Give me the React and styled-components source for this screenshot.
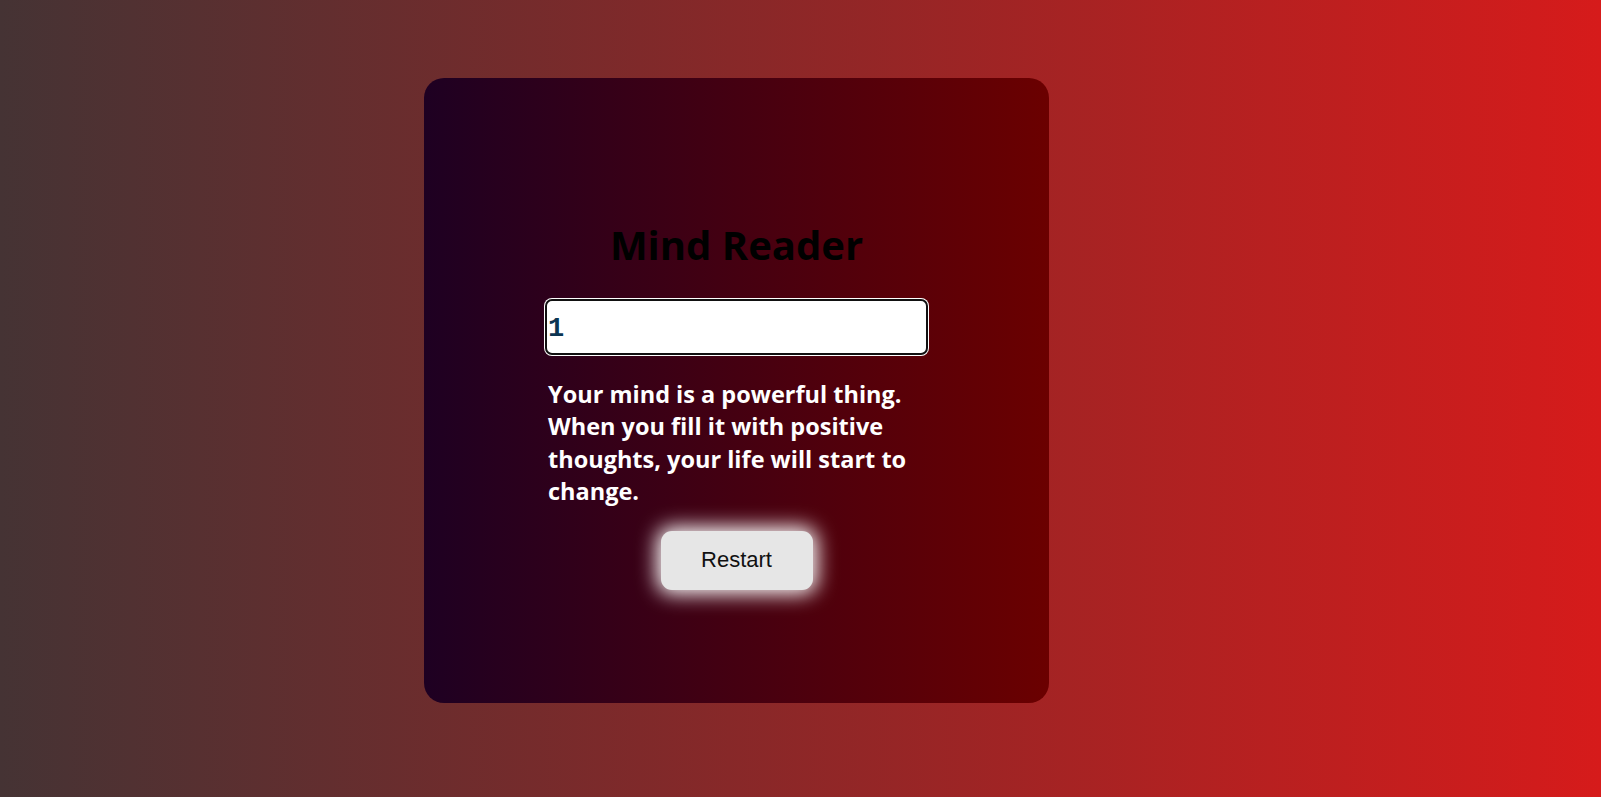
import { useState } from "react";
import styled, { createGlobalStyle } from "styled-components";

const GlobalStyle = createGlobalStyle`
  html, body {
    margin: 0;
    padding: 0;
  }

  body {
    min-height: 100vh;
    background: linear-gradient(to right, #453334, #d61b1b);
    font-family: "Open Sans", sans-serif;
  }
`;

const Page = styled.div`
  display: flex;
  align-items: flex-start;
  padding: 78px 0 0 424px;
  min-height: 100vh;
  box-sizing: border-box;
`;

const Card = styled.div`
  width: 625px;
  height: 625px;
  box-sizing: border-box;
  border-radius: 20px;
  background: linear-gradient(to right, #1e0022, #6b0000);
  display: flex;
  flex-direction: column;
  align-items: center;
  padding-top: 139px;
`;

const Title = styled.h1`
  margin: 0 0 27px;
  font-family: "Open Sans", sans-serif;
  font-size: 40px;
  font-weight: 700;
  line-height: normal;
  color: #000;
`;

const NumberInput = styled.input`
  width: 383px;
  height: 56px;
  box-sizing: border-box;
  border: 2px solid #111;
  border-radius: 7px;
  box-shadow: 0 0 0 1px #fff;
  background: #fff;
  padding: 4px 1px 0;
  font-family: "Liberation Mono", monospace;
  font-size: 27px;
  font-weight: 700;
  color: #0b3552;
  outline: none;
`;

const Message = styled.p`
  width: 385px;
  box-sizing: border-box;
  margin: 23px 0 23px;
  padding: 0 4px;
  font-family: "Open Sans", sans-serif;
  font-size: 23.5px;
  font-weight: 700;
  line-height: 32.4px;
  color: #fff;
`;

const Button = styled.button`
  width: 152px;
  height: 59px;
  border: none;
  border-radius: 11px;
  background: #e6e6e6;
  box-shadow: 0 0 20px 4px #fff;
  font-family: "Liberation Sans", Arial, sans-serif;
  font-size: 22px;
  color: #111;
  cursor: pointer;
`;

const App = () => {
  const [value, setValue] = useState("1");

  return (
    <>
      <GlobalStyle />
      <Page>
        <Card>
          <Title>Mind Reader</Title>
          <NumberInput
            value={value}
            onChange={(e) => setValue(e.target.value)}
          />
          <Message>
            Your mind is a powerful thing. When you fill it with positive
            thoughts, your life will start to change.
          </Message>
          <Button onClick={() => setValue("")}>Restart</Button>
        </Card>
      </Page>
    </>
  );
};

export default App;
